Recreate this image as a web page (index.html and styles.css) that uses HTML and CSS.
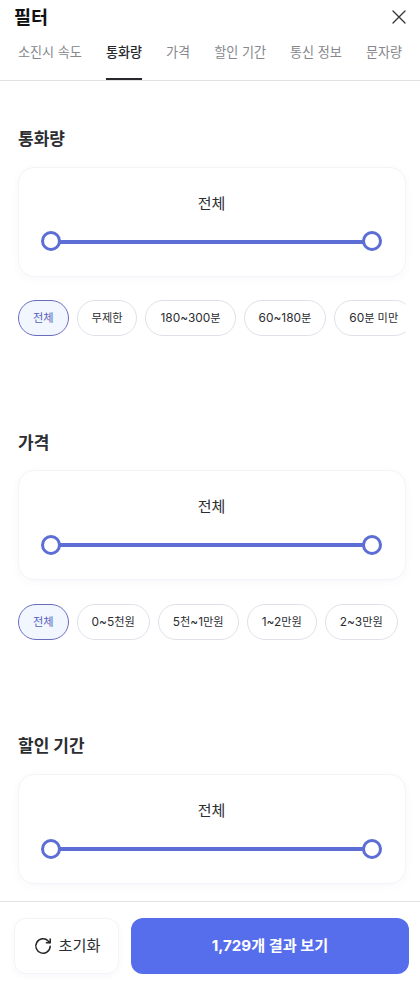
FILE: index.html
```html
<!DOCTYPE html>
<html lang="ko">

<head>
    <meta charset="UTF-8">
    <meta name="viewport" content="width=device-width, initial-scale=1.0">
    <title>필터</title>
    <link rel="stylesheet" href="styles.css">
</head>

<body>
    <div class="filter">
        <header class="header">
            <h1>필터</h1>
            <button type="button" class="btn-close" aria-label="닫기">
                <svg width="14" height="14" viewBox="0 0 14 14" fill="none" stroke="#333" stroke-width="1.3" stroke-linecap="round">
                    <path d="M1 1l12 12M13 1L1 13" />
                </svg>
            </button>
        </header>

        <nav class="tabs">
            <a class="tab">소진시 속도</a>
            <a class="tab active">통화량</a>
            <a class="tab">가격</a>
            <a class="tab">할인 기간</a>
            <a class="tab">통신 정보</a>
            <a class="tab">문자량</a>
        </nav>

        <main class="content">
            <section class="group">
                <h2>통화량</h2>
                <div class="card">
                    <p class="value">전체</p>
                    <div class="slider">
                        <span class="knob"></span>
                        <span class="track"></span>
                        <span class="knob"></span>
                    </div>
                </div>
                <div class="chips">
                    <button type="button" class="chip selected">전체</button>
                    <button type="button" class="chip">무제한</button>
                    <button type="button" class="chip"><span class="num">180~300</span>분</button>
                    <button type="button" class="chip"><span class="num">60~180</span>분</button>
                    <button type="button" class="chip"><span class="num">60</span>분 미만</button>
                </div>
            </section>

            <section class="group">
                <h2>가격</h2>
                <div class="card">
                    <p class="value">전체</p>
                    <div class="slider">
                        <span class="knob"></span>
                        <span class="track"></span>
                        <span class="knob"></span>
                    </div>
                </div>
                <div class="chips">
                    <button type="button" class="chip selected">전체</button>
                    <button type="button" class="chip"><span class="num">0~5</span>천원</button>
                    <button type="button" class="chip"><span class="num">5</span>천<span class="num">~1</span>만원</button>
                    <button type="button" class="chip"><span class="num">1~2</span>만원</button>
                    <button type="button" class="chip"><span class="num">2~3</span>만원</button>
                </div>
            </section>

            <section class="group">
                <h2>할인 기간</h2>
                <div class="card">
                    <p class="value">전체</p>
                    <div class="slider">
                        <span class="knob"></span>
                        <span class="track"></span>
                        <span class="knob"></span>
                    </div>
                </div>
            </section>
        </main>

        <footer class="footer">
            <button type="button" class="btn-reset">
                <svg width="18" height="18" viewBox="0 0 18 18" fill="none" stroke="#222" stroke-width="1.5" stroke-linecap="round" stroke-linejoin="round">
                    <path d="M16.2 9.2a7.2 7.2 0 1 1-2-5.2l1.8 1.6" />
                    <path d="M16.2 2v3.8h-3.8" />
                </svg>
                <span>초기화</span>
            </button>
            <button type="button" class="btn-submit">1,729개 결과 보기</button>
        </footer>
    </div>
</body>

</html>
```
FILE: styles.css
```css
* {
    margin: 0;
    padding: 0;
    box-sizing: border-box;
    font-family: Inter, "Noto Sans CJK KR", sans-serif;
}

body {
    background-color: #fff;
    color: #2b2d31;
}

button {
    background: none;
    border: none;
    color: inherit;
    cursor: pointer;
}

.filter {
    display: flex;
    flex-direction: column;
    height: 981px;
    overflow: hidden;
}

.header {
    display: flex;
    justify-content: space-between;
    align-items: center;
    height: 34px;
    padding: 0 14px;
}

.header h1 {
    font-size: 18.5px;
    line-height: 34px;
    font-weight: 700;
    color: #111;
}

.btn-close {
    display: flex;
}

.tabs {
    display: flex;
    flex-shrink: 0;
    gap: 24px;
    height: 47px;
    padding: 0 18px;
    border-bottom: 1px solid #e1e1e4;
    overflow: hidden;
}

.tab {
    flex-shrink: 0;
    height: 46px;
    font-size: 13.1px;
    line-height: 36px;
    color: #85878c;
    white-space: nowrap;
}

.tab.active {
    color: #26282c;
    font-weight: 500;
    border-bottom: 2px solid #26282c;
}

.content {
    flex: 1;
    min-height: 0;
    padding: 46px 14px 0 18px;
    overflow: hidden;
}

.group {
    height: 303.7px;
}

.group h2 {
    height: 24px;
    margin-bottom: 15.7px;
    font-size: 17px;
    line-height: 24px;
    font-weight: 700;
}

.card {
    height: 110px;
    padding: 24px 23px 0 22px;
    border: 1px solid #f3f3f8;
    border-radius: 16px;
    box-shadow: 0 2px 8px rgba(80, 80, 160, 0.04);
}

.value {
    font-size: 15px;
    line-height: 24px;
    text-align: center;
}

.slider {
    display: flex;
    align-items: center;
    margin-top: 15.7px;
}

.knob {
    width: 20px;
    height: 20px;
    border: 3px solid #5d6dd6;
    border-radius: 50%;
}

.track {
    flex: 1;
    height: 4px;
    margin: 0.4px -1px 0;
    background-color: #5d6dd6;
}

.chips {
    display: flex;
    gap: 8px;
    margin-top: 23.3px;
    overflow: hidden;
}

.chip {
    flex-shrink: 0;
    height: 36px;
    padding: 0 14px 2px;
    border: 1px solid #e0e1e8;
    border-radius: 18px;
    font-size: 11.2px;
    white-space: nowrap;
}

.chip .num {
    font-size: 11.9px;
}

.chip.selected {
    background-color: #f1f6ff;
    border-color: #6a6cc0;
    color: #5560bd;
}

.footer {
    display: flex;
    flex-shrink: 0;
    gap: 12px;
    height: 80px;
    padding: 16px 11px 7px 14px;
    border-top: 1px solid #e1e1e6;
}

.btn-reset {
    display: flex;
    justify-content: center;
    align-items: center;
    gap: 7px;
    width: 105px;
    height: 56px;
    padding: 0 0 1px 1px;
    border: 1px solid #f3f3f8;
    border-radius: 12px;
    box-shadow: 0 2px 6px rgba(80, 80, 160, 0.04);
    font-size: 15.2px;
}

.btn-reset span {
    padding-bottom: 3px;
}

.btn-submit {
    flex: 1;
    height: 56px;
    padding-bottom: 4px;
    background-color: #566eec;
    border-radius: 12px;
    color: #fff;
    font-size: 15.2px;
    font-weight: 700;
}
```
